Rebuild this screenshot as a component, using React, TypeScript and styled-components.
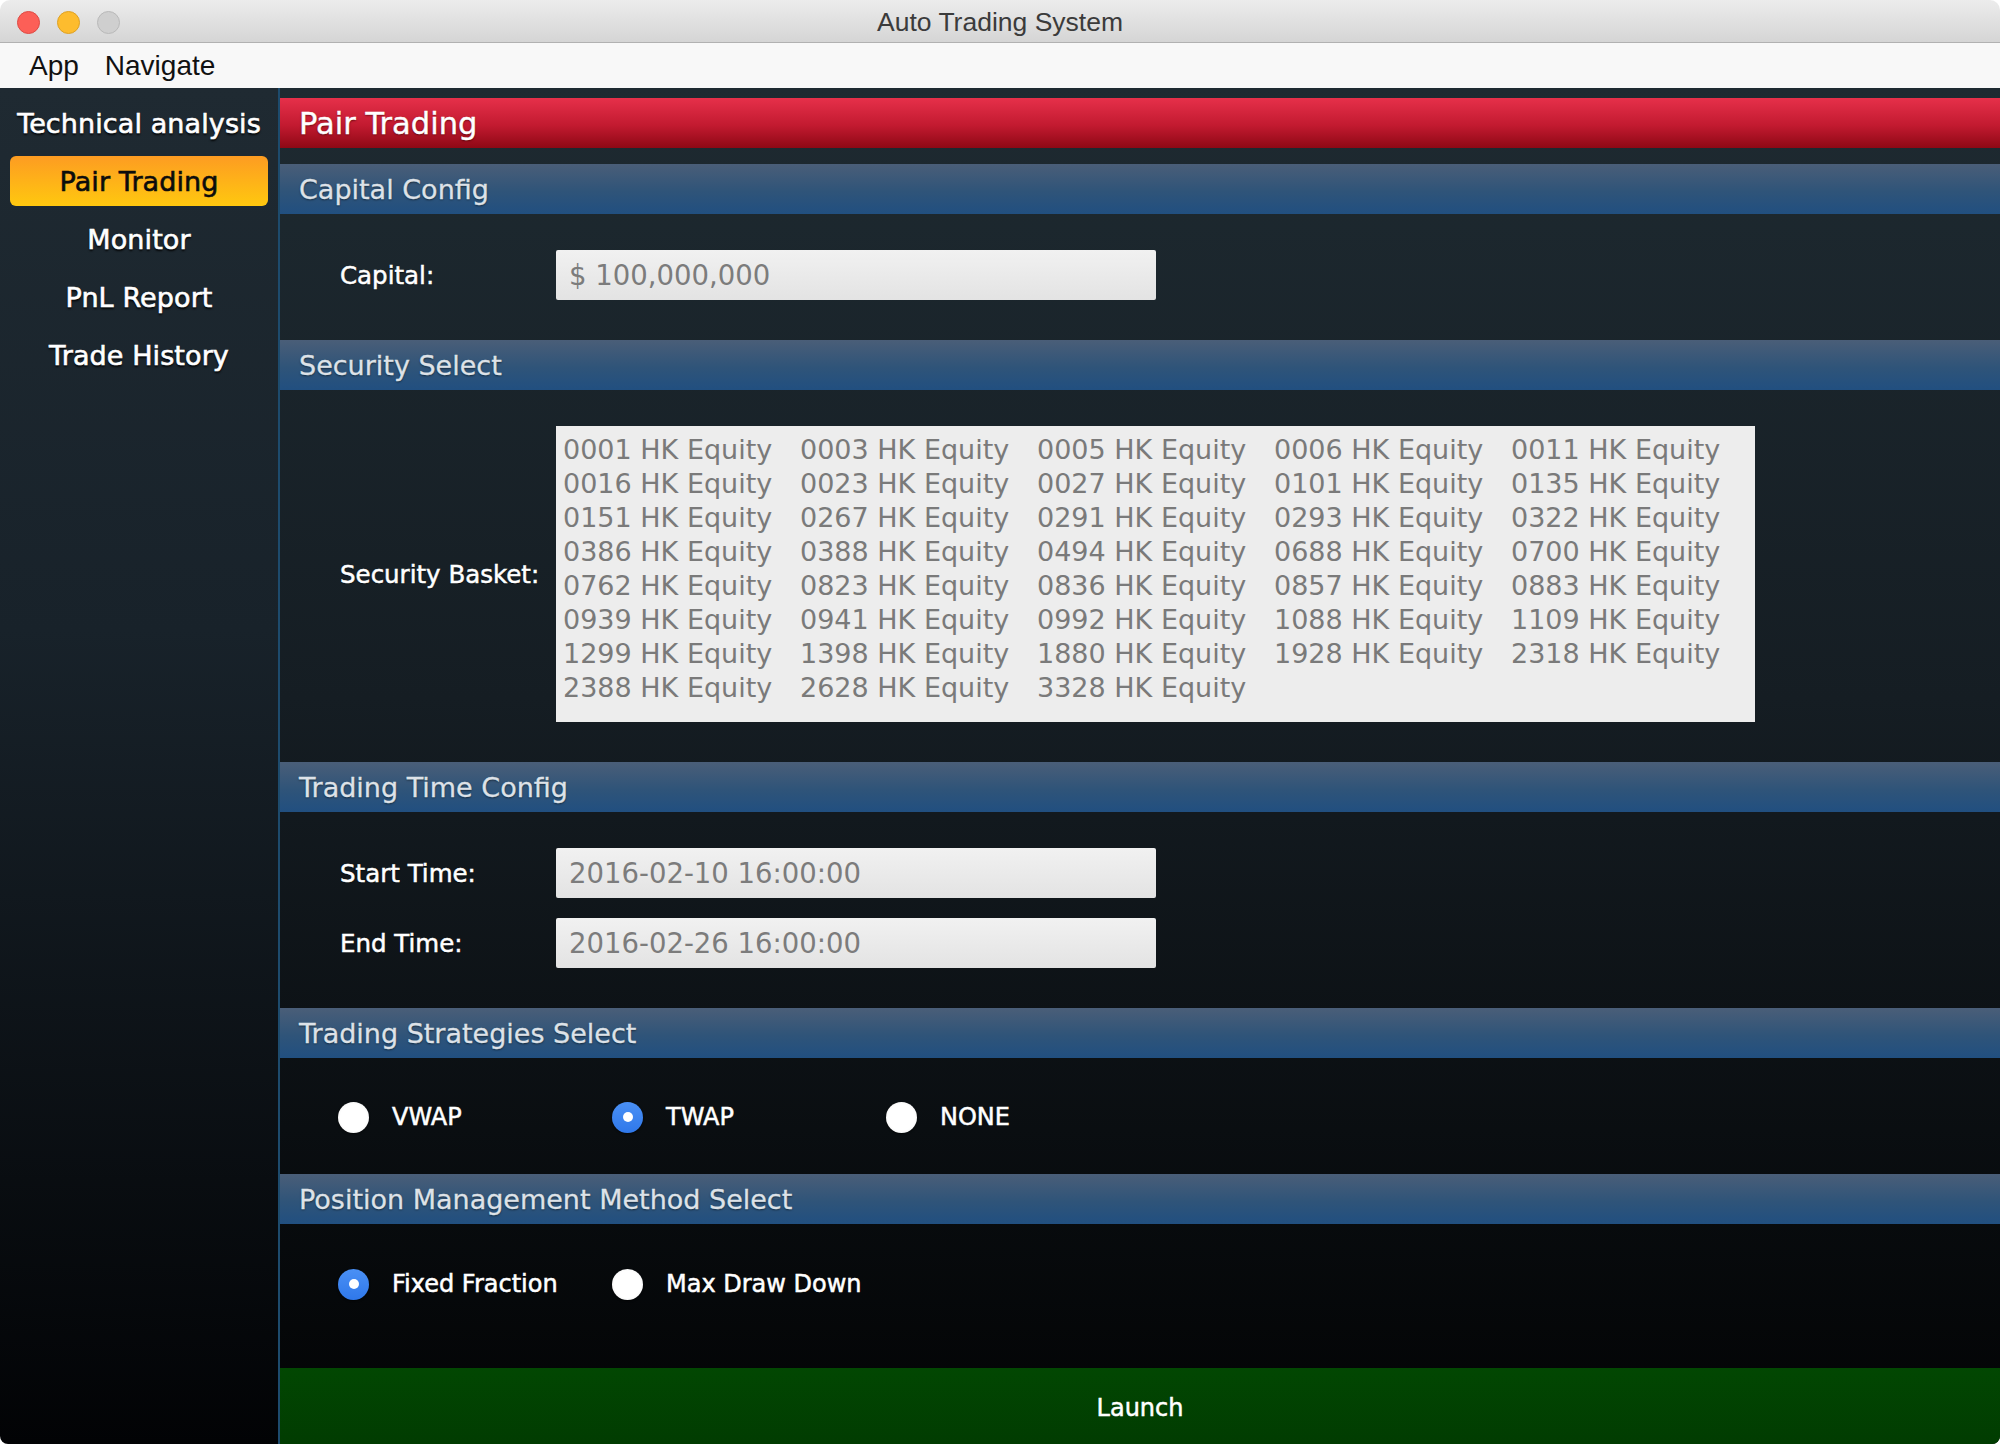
import React, { useState } from "react";
import styled, { createGlobalStyle } from "styled-components";

const GlobalStyle = createGlobalStyle`
  html, body {
    margin: 0;
    padding: 0;
    background: #ffffff;
    overflow: hidden;
  }
  * {
    box-sizing: border-box;
  }
`;

const securities = [
  "0001", "0003", "0005", "0006", "0011",
  "0016", "0023", "0027", "0101", "0135",
  "0151", "0267", "0291", "0293", "0322",
  "0386", "0388", "0494", "0688", "0700",
  "0762", "0823", "0836", "0857", "0883",
  "0939", "0941", "0992", "1088", "1109",
  "1299", "1398", "1880", "1928", "2318",
  "2388", "2628", "3328",
];

const navItems = ["Pair Trading", "Monitor", "PnL Report", "Trade History"];

const App: React.FC = () => {
  const [active, setActive] = useState("Pair Trading");
  const [strategy, setStrategy] = useState("TWAP");
  const [method, setMethod] = useState("Fixed Fraction");

  return (
    <>
      <GlobalStyle />
      <Window>
        <TitleBar>
          <Lights>
            <Light color="#fc5f57" border="#de4a43" />
            <Light color="#fdbc2e" border="#dea123" />
            <Light color="#cfcfcf" border="#b9b9b9" />
          </Lights>
          <Title>Auto Trading System</Title>
          <div />
        </TitleBar>
        <MenuBar>
          <MenuItem>App</MenuItem>
          <MenuItem>Navigate</MenuItem>
        </MenuBar>
        <Body>
          <Sidebar>
            <NavItem>Technical analysis</NavItem>
            {navItems.map((item) => (
              <NavItem
                key={item}
                $active={active === item}
                onClick={() => setActive(item)}
              >
                {item}
              </NavItem>
            ))}
          </Sidebar>
          <Main>
            <PageHeader>Pair Trading</PageHeader>

            <SectionHeader>Capital Config</SectionHeader>
            <SectionBody>
              <FormRow>
                <Label>Capital:</Label>
                <Field>$ 100,000,000</Field>
              </FormRow>
            </SectionBody>

            <SectionHeader>Security Select</SectionHeader>
            <SectionBody>
              <FormRow>
                <Label>Security Basket:</Label>
                <Basket>
                  {securities.map((code) => (
                    <BasketItem key={code}>{code} HK Equity</BasketItem>
                  ))}
                </Basket>
              </FormRow>
            </SectionBody>

            <SectionHeader>Trading Time Config</SectionHeader>
            <SectionBody>
              <FormStack>
                <FormRow>
                  <Label>Start Time:</Label>
                  <Field>2016-02-10 16:00:00</Field>
                </FormRow>
                <FormRow>
                  <Label>End Time:</Label>
                  <Field>2016-02-26 16:00:00</Field>
                </FormRow>
              </FormStack>
            </SectionBody>

            <SectionHeader>Trading Strategies Select</SectionHeader>
            <RadioBody>
              <RadioGroup>
                {["VWAP", "TWAP", "NONE"].map((s) => (
                  <RadioItem key={s} onClick={() => setStrategy(s)}>
                    <RadioDot $checked={strategy === s} />
                    <RadioLabel>{s}</RadioLabel>
                  </RadioItem>
                ))}
              </RadioGroup>
            </RadioBody>

            <SectionHeader>Position Management Method Select</SectionHeader>
            <RadioBody $fill>
              <RadioGroup>
                {["Fixed Fraction", "Max Draw Down"].map((m) => (
                  <RadioItem key={m} onClick={() => setMethod(m)}>
                    <RadioDot $checked={method === m} />
                    <RadioLabel>{m}</RadioLabel>
                  </RadioItem>
                ))}
              </RadioGroup>
            </RadioBody>

            <LaunchButton>Launch</LaunchButton>
          </Main>
        </Body>
      </Window>
    </>
  );
};

export default App;

const Window = styled.div`
  width: 2000px;
  height: 1444px;
  display: flex;
  flex-direction: column;
  border-radius: 10px 10px 8px 8px;
  overflow: hidden;
  font-family: "DejaVu Sans", Verdana, sans-serif;
`;

const TitleBar = styled.div`
  height: 43px;
  flex-shrink: 0;
  display: grid;
  grid-template-columns: 1fr auto 1fr;
  align-items: center;
  padding-top: 2px;
  background: linear-gradient(#ececec, #d5d5d5);
  border-bottom: 1px solid #b1b1b1;
`;

const Lights = styled.div`
  display: flex;
  gap: 17px;
  padding-left: 17px;
`;

const Light = styled.span<{ color: string; border: string }>`
  width: 23px;
  height: 23px;
  border-radius: 50%;
  background: ${(p) => p.color};
  border: 1px solid ${(p) => p.border};
`;

const Title = styled.div`
  font-family: "Liberation Sans", Arial, sans-serif;
  font-size: 26.5px;
  color: #3b3b3b;
`;

const MenuBar = styled.div`
  height: 45px;
  flex-shrink: 0;
  display: flex;
  align-items: center;
  gap: 26px;
  padding-left: 29px;
  background: #f8f8f8;
`;

const MenuItem = styled.span`
  font-family: "Liberation Sans", Arial, sans-serif;
  font-size: 28px;
  color: #111;
`;

const Body = styled.div`
  flex: 1;
  display: flex;
  min-height: 0;
`;

const Sidebar = styled.div`
  width: 280px;
  flex-shrink: 0;
  display: flex;
  flex-direction: column;
  gap: 8px;
  padding: 10px 10px 0 10px;
  background: linear-gradient(#1f2a32 0%, #18222a 40%, #020305 100%);
  border-right: 2px solid #1d4b6d;
`;

const NavItem = styled.div<{ $active?: boolean }>`
  height: 50px;
  display: flex;
  align-items: center;
  justify-content: center;
  border-radius: 6px;
  font-size: 27px;
  letter-spacing: 0.1px;
  white-space: nowrap;
  cursor: pointer;
  -webkit-text-stroke: 0.6px currentColor;
  color: ${(p) => (p.$active ? "#0c0c0c" : "#ffffff")};
  text-shadow: ${(p) =>
    p.$active ? "none" : "0 2px 2px rgba(0, 0, 0, 0.9)"};
  background: ${(p) =>
    p.$active ? "linear-gradient(#fd9c22, #ffc80f)" : "transparent"};
`;

const Main = styled.div`
  flex: 1;
  display: flex;
  flex-direction: column;
  padding-top: 10px;
  background: linear-gradient(#1e2a31 0%, #151d23 45%, #020304 100%);
`;

const PageHeader = styled.div`
  height: 50px;
  flex-shrink: 0;
  display: flex;
  align-items: center;
  padding-left: 19px;
  margin-bottom: 16px;
  font-size: 30.5px;
  color: #ffffff;
  -webkit-text-stroke: 0.4px #ffffff;
  text-shadow: 0 1px 2px rgba(60, 0, 0, 0.7);
  background: linear-gradient(#e6304a, #c21a30 55%, #8e0815);
`;

const SectionHeader = styled.div`
  height: 50px;
  flex-shrink: 0;
  display: flex;
  align-items: center;
  padding-left: 19px;
  font-size: 27px;
  color: #dde2e8;
  -webkit-text-stroke: 0.3px #dde2e8;
  text-shadow: 0 1px 2px rgba(0, 0, 0, 0.55);
  background: linear-gradient(#4a5e78, #2f5479 55%, #214f80);
`;

const SectionBody = styled.div`
  padding: 36px 0 40px 60px;
`;

const FormStack = styled.div`
  display: flex;
  flex-direction: column;
  gap: 20px;
`;

const FormRow = styled.div`
  display: grid;
  grid-template-columns: 216px auto;
  justify-content: start;
  align-items: center;
`;

const Label = styled.div`
  font-size: 24.5px;
  color: #ffffff;
  -webkit-text-stroke: 0.5px #ffffff;
  text-shadow: 0 1px 1px rgba(0, 0, 0, 0.6);
`;

const Field = styled.div`
  width: 600px;
  height: 50px;
  display: flex;
  align-items: center;
  padding-left: 13px;
  font-size: 27.5px;
  color: #7c7c7c;
  background: linear-gradient(#f1f1f1, #e3e3e3);
  border-radius: 2px;
`;

const Basket = styled.div`
  width: 1199px;
  height: 296px;
  display: grid;
  grid-template-columns: repeat(5, 237px);
  grid-auto-rows: 34px;
  align-content: start;
  padding: 7px 0 0 7px;
  background: #ededed;
`;

const BasketItem = styled.div`
  font-size: 27px;
  line-height: 34px;
  color: #7a7a7a;
  white-space: nowrap;
`;

const RadioBody = styled.div<{ $fill?: boolean }>`
  padding: ${(p) => (p.$fill ? "45px 0 0 58px" : "44px 0 42px 58px")};
  flex: ${(p) => (p.$fill ? 1 : "none")};
`;

const RadioGroup = styled.div`
  display: flex;
  gap: 52px;
`;

const RadioItem = styled.div`
  min-width: 222px;
  height: 30px;
  display: flex;
  align-items: center;
  gap: 23px;
  cursor: pointer;
`;

const RadioDot = styled.span<{ $checked: boolean }>`
  width: 31px;
  height: 31px;
  flex-shrink: 0;
  border-radius: 50%;
  display: flex;
  align-items: center;
  justify-content: center;
  background: ${(p) =>
    p.$checked
      ? "linear-gradient(#4a90f5, #2f78ea)"
      : "radial-gradient(circle, #ffffff 60%, #e6e6e6 100%)"};
  box-shadow: 0 1px 2px rgba(0, 0, 0, 0.6);

  &::after {
    content: "";
    width: 10px;
    height: 10px;
    border-radius: 50%;
    background: #ffffff;
    display: ${(p) => (p.$checked ? "block" : "none")};
  }
`;

const RadioLabel = styled.span`
  font-size: 24px;
  color: #ffffff;
  -webkit-text-stroke: 0.5px #ffffff;
  white-space: nowrap;
`;

const LaunchButton = styled.div`
  height: 76px;
  flex-shrink: 0;
  display: flex;
  align-items: center;
  justify-content: center;
  padding-top: 4px;
  font-size: 24px;
  color: #ffffff;
  -webkit-text-stroke: 0.5px #ffffff;
  cursor: pointer;
  background: linear-gradient(#024702, #013c01);
`;
